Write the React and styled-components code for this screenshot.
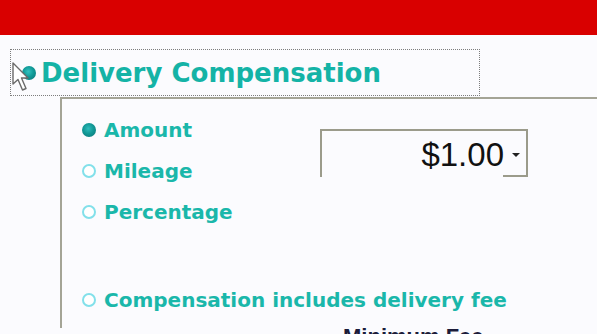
import React from "react";
import styled, { createGlobalStyle } from "styled-components";

const Global = createGlobalStyle`
  html, body { margin: 0; padding: 0; background: #fbfbfe; }
  body { overflow: hidden; }
  * { box-sizing: border-box; }
`;

const Page = styled.div`
  width: 597px;
  height: 334px;
  overflow: hidden;
  background: #fbfbfe;
  display: flex;
  flex-direction: column;
  font-family: "DejaVu Sans", Verdana, sans-serif;
  position: relative;
`;

const RedBar = styled.div`
  height: 35px;
  flex: none;
  background: #d90000;
`;

const Body = styled.div`
  padding-top: 14px;
  display: flex;
  flex-direction: column;
  flex: none;
`;

const FocusBox = styled.div`
  margin-left: 10px;
  width: 470px;
  height: 47px;
  flex: none;
  border: 1px dotted #7d7d7d;
  display: flex;
  align-items: center;
  gap: 5px;
  padding-left: 11px;
  position: relative;
  z-index: 1;
  background: #fbfbfe;
`;

const Bullet = styled.span`
  width: 14px;
  height: 14px;
  border-radius: 50%;
  flex: none;
  background: radial-gradient(circle at 45% 40%, #33c2c0 0%, #109a98 45%, #0a6f72 100%);
`;

const Heading = styled.h1`
  margin: 0;
  font-family: "DejaVu Sans", Verdana, sans-serif;
  font-weight: bold;
  font-size: 26px;
  color: #14b3a6;
`;

const Cursor = styled.svg`
  position: absolute;
  left: 12px;
  top: 62px;
  z-index: 2;
`;

const Group = styled.div`
  margin-left: 60px;
  margin-top: 1px;
  height: 231px;
  flex: none;
  border-top: 2px solid #a4a496;
  border-left: 2px solid #a4a496;
  display: flex;
  flex-direction: column;
  & > * { flex: none; }
`;

const TopArea = styled.div`
  display: flex;
`;

const RadioList = styled.div`
  width: 258px;
  padding: 10px 0 0 20px;
  display: flex;
  flex-direction: column;
`;

const OptionRow = styled.label`
  display: flex;
  align-items: center;
  gap: 8px;
  height: 41px;
  flex: none;
  margin-top: ${(p) => p.$gap || 0}px;
  margin-left: ${(p) => p.$indent || 0}px;
  font-size: 20px;
  font-weight: bold;
  color: #1ab7aa;
  white-space: nowrap;
`;

const Radio = styled.span`
  width: 14px;
  height: 14px;
  border-radius: 50%;
  flex: none;
  ${(p) =>
    p.$checked
      ? `background: radial-gradient(circle at 45% 40%, #2fbcbc 0%, #119896 45%, #0b7375 100%);`
      : `background: #ffffff; border: 2px solid #82e0ea;`}
`;

const RightArea = styled.div`
  padding-top: 30px;
`;

const Dropdown = styled.div`
  position: relative;
  width: 208px;
  height: 48px;
  border-top: 2px solid #9b9b8b;
  border-left: 2px solid #9b9b8b;
  border-right: 2px solid #9b9b8b;
  display: flex;
  align-items: center;
  justify-content: flex-end;
  padding-right: 5px;
  gap: 8px;
  &::after {
    content: "";
    position: absolute;
    right: -2px;
    bottom: 0;
    width: 25px;
    height: 2px;
    background: #9b9b8b;
  }
`;

const Value = styled.span`
  font-family: "Liberation Sans", Arial, sans-serif;
  font-size: 33px;
  color: #111;
  line-height: 1;
`;

const Caret = styled.svg`
  flex: none;
  margin-top: 2px;
`;

const Footer = styled.div`
  margin-left: 281px;
  margin-top: 4px;
  font-family: "Liberation Sans", Arial, sans-serif;
  font-size: 22px;
  font-weight: bold;
  color: #1c1c3a;
  white-space: nowrap;
`;

const options = [
  { label: "Amount", checked: true },
  { label: "Mileage" },
  { label: "Percentage" },
];

export default function App() {
  return (
    <Page>
      <Global />
      <RedBar />
      <Body>
        <FocusBox>
          <Bullet />
          <Heading>Delivery Compensation</Heading>
        </FocusBox>
        <Group>
          <TopArea>
            <RadioList>
              {options.map((o) => (
                <OptionRow key={o.label}>
                  <Radio $checked={o.checked} />
                  {o.label}
                </OptionRow>
              ))}
            </RadioList>
            <RightArea>
              <Dropdown>
                <Value>$1.00</Value>
                <Caret width="9" height="6" viewBox="0 0 9 6">
                  <path d="M0 1 H8 L4 5 Z" fill="#222" />
                </Caret>
              </Dropdown>
            </RightArea>
          </TopArea>
          <OptionRow $gap={47} $indent={20}>
            <Radio />
            Compensation includes delivery fee
          </OptionRow>
          <Footer>Minimum Fee</Footer>
        </Group>
      </Body>
      <Cursor width="18" height="32" viewBox="0 0 18 32">
        <path
          d="M1 1 L1 22 L6 17.5 L10.5 28 L14 26.5 L9.5 16 L16 16 Z"
          fill="#ffffff"
          stroke="#6a6a6a"
          strokeWidth="1.4"
          strokeLinejoin="round"
        />
      </Cursor>
    </Page>
  );
}
